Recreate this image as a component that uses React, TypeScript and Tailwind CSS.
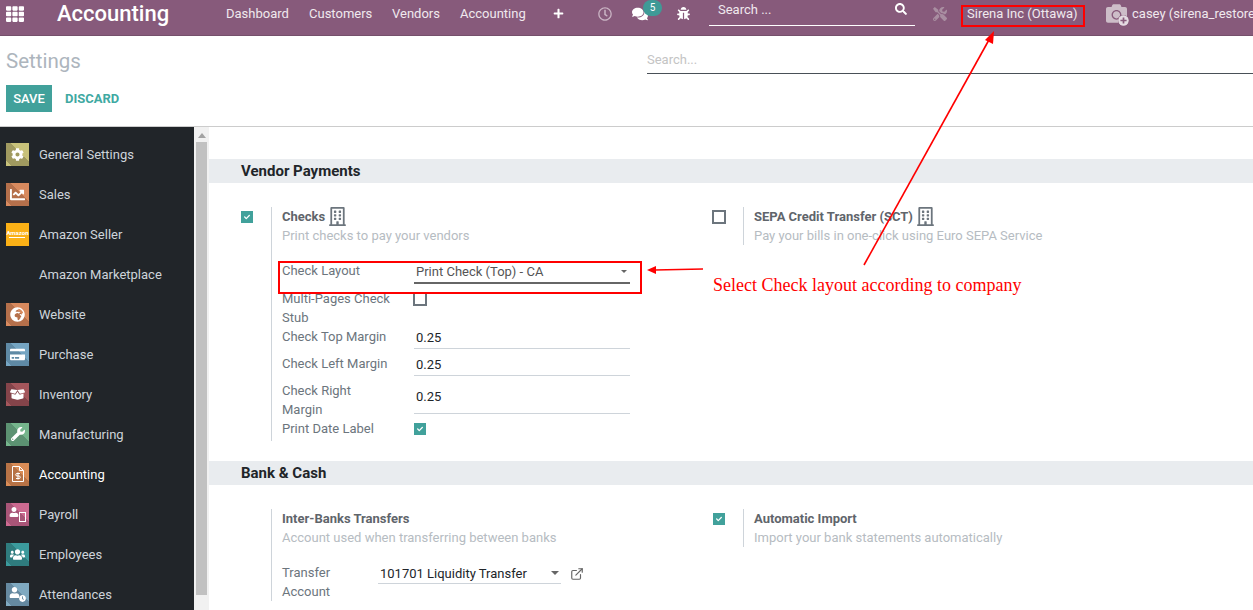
import type { ReactNode } from 'react';
import {
  FaBug,
  FaCamera,
  FaChartLine,
  FaCheck,
  FaClock,
  FaCog,
  FaComments,
  FaCreditCard,
  FaGlobeAfrica,
  FaPlus,
  FaRegBuilding,
  FaRegClock,
  FaSearch,
  FaTh,
  FaTools,
  FaUser,
  FaUsers,
  FaWrench,
  FaBoxOpen,
  FaPlusCircle,
} from 'react-icons/fa';
import { ExternalLink } from 'lucide-react';

const NAV_LINKS = [
  { label: 'Dashboard', cls: 'w-[83px]' },
  { label: 'Customers', cls: 'w-[83px]' },
  { label: 'Vendors', cls: 'w-[68px]' },
  { label: 'Accounting', cls: 'w-[93px]' },
];

const APPS: { label: string; bg: string; icon: ReactNode; active?: boolean }[] = [
  { label: 'General Settings', bg: 'bg-[linear-gradient(45deg,#c8c27a_12%,#a09a60_12%_60%,#c8c27a_60%)]', icon: <FaCog className="text-[13px]" /> },
  { label: 'Sales', bg: 'bg-[linear-gradient(45deg,#d88a5e_12%,#b5704b_12%_60%,#d88a5e_60%)]', icon: <FaChartLine className="text-[15px]" /> },
  {
    label: 'Amazon Seller',
    bg: 'bg-[#fbb116]',
    icon: (
      <span className="flex flex-col items-center text-[6px] leading-none font-bold">
        Amazon
        <span className="mt-[1px] h-[1px] w-[16px] bg-white" />
      </span>
    ),
  },
  { label: 'Amazon Marketplace', bg: '', icon: null },
  { label: 'Website', bg: 'bg-[linear-gradient(45deg,#d88a5e_12%,#b5704b_12%_60%,#d88a5e_60%)]', icon: <FaGlobeAfrica className="text-[15px]" /> },
  { label: 'Purchase', bg: 'bg-[linear-gradient(45deg,#75a5c2_12%,#5f8aa5_12%_60%,#75a5c2_60%)]', icon: <FaCreditCard className="text-[15px]" /> },
  { label: 'Inventory', bg: 'bg-[linear-gradient(45deg,#a4565b_12%,#84444a_12%_60%,#a4565b_60%)]', icon: <FaBoxOpen className="text-[15px]" /> },
  { label: 'Manufacturing', bg: 'bg-[linear-gradient(45deg,#75b58c_12%,#5c9272_12%_60%,#75b58c_60%)]', icon: <FaWrench className="text-[14px]" /> },
  {
    label: 'Accounting',
    bg: 'bg-[linear-gradient(45deg,#d98c56_12%,#b77346_12%_60%,#d98c56_60%)]',
    icon: (
      <svg width="12" height="16" viewBox="0 0 12 16" fill="none" stroke="currentColor" strokeWidth="1">
        <path d="M.5.5h7l4 4v11H.5z" />
        <path d="M7.5.5v4h4" />
        <path d="M8 7.5H5a1 1 0 0 0 0 2.500h2a1 1 0 0 1 0 2.500H4M6 6.500v7" />
      </svg>
    ),
    active: true,
  },
  {
    label: 'Payroll',
    bg: 'bg-[linear-gradient(45deg,#cc6a90_12%,#a85577_12%_60%,#cc6a90_60%)]',
    icon: (
      <span className="relative block h-[15px] w-[17px]">
        <FaUser className="absolute left-0 top-0 text-[10px]" />
        <span className="absolute bottom-0 right-0 h-[10px] w-[7px] border border-white" />
      </span>
    ),
  },
  { label: 'Employees', bg: 'bg-[linear-gradient(45deg,#3b9a9c_12%,#2f7c7e_12%_60%,#3b9a9c_60%)]', icon: <FaUsers className="text-[15px]" /> },
  {
    label: 'Attendances',
    bg: 'bg-[linear-gradient(45deg,#7fa9c0_12%,#6589a0_12%_60%,#7fa9c0_60%)]',
    icon: (
      <span className="relative block h-[15px] w-[17px]">
        <FaUser className="absolute left-0 top-0 text-[11px]" />
        <FaClock className="absolute bottom-0 right-0 text-[7px]" />
      </span>
    ),
  },
];

function Checkbox({ checked, size = 'w-3 h-3' }: { checked?: boolean; size?: string }) {
  if (checked) {
    return (
      <span className={`flex ${size} items-center justify-center bg-[#41a19b] text-white`}>
        <FaCheck className="text-[6px]" />
      </span>
    );
  }
  return <span className={`block ${size} border-2 border-[#6c757d] bg-white`} />;
}

function SectionHeader({ children }: { children: ReactNode }) {
  return <div className="flex h-6 items-center bg-[#e9ecef] pl-8 text-[15px] font-bold text-[#212529]">{children}</div>;
}

function FieldRow({ label, value, rowCls, lineCls = 'border-b border-[#ced4da]' }: { label: ReactNode; value: ReactNode; rowCls: string; lineCls?: string }) {
  return (
    <div className={`flex ${rowCls}`}>
      <div className="w-[132px] shrink-0 text-[#6c757d]">{label}</div>
      <div className="w-[216px] shrink-0">
        <div className={`py-[1px] pl-[2px] text-[13px] text-[#212529] ${lineCls}`}>{value}</div>
      </div>
    </div>
  );
}

export default function App() {
  return (
    <div className="relative h-[610px] w-[1253px] overflow-hidden bg-white font-['Roboto',sans-serif] text-[13px] leading-[19px]">
      {/* top bar */}
      <header className="flex h-[36px] items-center overflow-hidden whitespace-nowrap border-b border-[#75506b] bg-[#875a7b] pb-[8px] text-[#f0e9ee] [&>*]:shrink-0">
        <FaTh className="ml-[6px] text-[18px] text-white" />
        <span className="ml-[33px] w-[169px] text-[22px] font-medium leading-none text-white">Accounting</span>
        {NAV_LINKS.map((l) => (
          <span key={l.label} className={l.cls}>
            {l.label}
          </span>
        ))}
        <FaPlus className="ml-[0px] text-[11px] text-white" />
        <FaRegClock className="ml-[34px] text-[14px] text-[#c9b3c3]" />
        <span className="relative ml-[20px]">
          <FaComments className="text-[16px] text-white" />
          <span className="absolute -top-[6px] left-[11px] flex h-[16px] w-[19px] items-center justify-center rounded-full bg-[#3f9a97] text-[10px] leading-none text-white">
            5
          </span>
        </span>
        <FaBug className="ml-[29px] text-[13px] text-white" />
        <div className="ml-[19px] flex h-[26px] w-[206px] items-start justify-between self-start border-b border-white pl-[9px] pr-2 text-[#f0e9ee]">
          <span>Search ...</span>
          <FaSearch className="mt-[3px] text-[12px] text-white" />
        </div>
        <FaTools className="ml-[18px] text-[14px] text-[#a98ea1]" />
        <span className="ml-[20px] w-[139px]">Sirena Inc (Ottawa)</span>
        <span className="relative">
          <FaCamera className="text-[21px] text-[#cdbdc8]" />
          <FaPlusCircle className="absolute -bottom-[2px] right-[-2px] rounded-full bg-[#875a7b] text-[11px] text-[#e4dae1]" />
        </span>
        <span className="ml-[5px]">casey (sirena_restored)</span>
      </header>

      {/* control panel */}
      <div className="h-[91px] border-b border-[#ccc] pl-[6px]">
        <div className="flex items-start justify-between">
          <span className="mt-[11px] text-[20.5px] leading-7 text-[#adb5bd]">Settings</span>
          <div className="mt-[14px] h-[24px] w-[606px] border-b border-[#495057] text-[#c4c4c4]">Search...</div>
        </div>
        <div className="mt-[10px] flex items-center">
          <button className="h-[27px] w-[46px] bg-[#41a19b] text-[13px] font-medium text-white">SAVE</button>
          <button className="ml-[13px] text-[13px] font-bold text-[#3fa9a2]">DISCARD</button>
        </div>
      </div>

      <div className="flex h-[483px]">
        {/* apps sidebar */}
        <aside className="w-[194px] shrink-0 bg-[#212529] pt-[7px] text-[#ced4da]">
          {APPS.map((a) => (
            <div key={a.label} className="flex h-10 items-center pl-[6px]">
              <span className={`flex h-[23px] w-[23px] shrink-0 items-center justify-center text-white ${a.bg}`}>{a.icon}</span>
              <span className={`ml-[10px] ${a.active ? 'text-white' : ''}`}>{a.label}</span>
            </div>
          ))}
        </aside>

        {/* scrollbar */}
        <div className="flex w-[15px] shrink-0 flex-col items-center bg-[#f1f1f1] pt-[6px]">
          <span className="h-0 w-0 border-x-[4px] border-b-[5px] border-x-transparent border-b-[#a3a3a3]" />
          <span className="mt-[4px] h-[453px] w-[11px] bg-[#c1c1c1]" />
        </div>

        {/* settings body */}
        <main className="min-w-0 flex-1 pt-[32px]">
          <SectionHeader>Vendor Payments</SectionHeader>

          <div className="mt-[24px] flex">
            <div className="flex w-[503px] shrink-0">
              <div className="ml-[32px] mt-[4px] w-[30px]">
                <Checkbox checked />
              </div>
              <div className="h-[234px] border-l border-[#ced4da] pl-[10px]">
                <div className="flex h-[19px] items-center gap-[3px] font-bold text-[#5f656b]">
                  Checks <FaRegBuilding className="text-[19px] text-[#6c757d]" />
                </div>
                <div className="text-[#b6bcc2]">Print checks to pay your vendors</div>
                <FieldRow
                  rowCls="mt-[16px] h-[28px]"
                  label="Check Layout"
                  lineCls="border-b-2 border-[#666]"
                  value={
                    <div className="flex items-center justify-between pr-[3px] text-[#555]">
                      Print Check (Top) - CA
                      <span className="h-0 w-0 border-x-[3px] border-t-[3px] border-x-transparent border-t-[#666]" />
                    </div>
                  }
                />
                <div className="flex h-[38px]">
                  <div className="w-[131px] shrink-0 text-[#6c757d]">
                    Multi-Pages Check
                    <br />
                    Stub
                  </div>
                  <div className="pt-[3px]">
                    <Checkbox size="w-[14px] h-[14px]" />
                  </div>
                </div>
                <FieldRow rowCls="h-[27px]" label="Check Top Margin" value="0.25" />
                <FieldRow rowCls="h-[27px]" label="Check Left Margin" value="0.25" />
                <div className="flex h-[38px]">
                  <div className="w-[132px] shrink-0 text-[#6c757d]">
                    Check Right
                    <br />
                    Margin
                  </div>
                  <div className="h-[33px] w-[216px] border-b border-[#ced4da] pl-[2px] pt-[6px] text-[#212529]">0.25</div>
                </div>
                <div className="flex h-[19px]">
                  <div className="w-[132px] shrink-0 text-[#6c757d]">Print Date Label</div>
                  <div className="pt-1">
                    <Checkbox checked />
                  </div>
                </div>
              </div>
            </div>
            <div className="flex">
              <div className="mt-[3px] w-[31px]">
                <Checkbox size="w-[14px] h-[14px]" />
              </div>
              <div className="h-[38px] border-l border-[#ced4da] pl-[10px]">
                <div className="flex h-[19px] items-center gap-[3px] font-bold text-[#5f656b]">
                  SEPA Credit Transfer (SCT) <FaRegBuilding className="text-[19px] text-[#6c757d]" />
                </div>
                <div className="text-[#b6bcc2]">Pay your bills in one-click using Euro SEPA Service</div>
              </div>
            </div>
          </div>

          <div className="mt-[20px]">
            <SectionHeader>Bank &amp; Cash</SectionHeader>
          </div>

          <div className="mt-[24px] flex">
            <div className="flex w-[503px] shrink-0">
              <div className="ml-[62px] h-[92px] border-l border-[#ced4da] pl-[10px]">
                <div className="font-bold text-[#5f656b]">Inter-Banks Transfers</div>
                <div className="text-[#b6bcc2]">Account used when transferring between banks</div>
                <div className="mt-[16px] flex">
                  <div className="w-[96px] shrink-0 text-[#6c757d]">
                    Transfer
                    <br />
                    Account
                  </div>
                  <div className="flex h-[21px] w-[183px] items-center justify-between border-b border-[#ced4da] pl-[2px] pr-[2px] text-[#212529]">
                    101701 Liquidity Transfer
                    <span className="h-0 w-0 border-x-[4px] border-t-[4px] border-x-transparent border-t-[#666]" />
                  </div>
                  <ExternalLink className="ml-[9px] mt-[4px] h-[14px] w-[14px] text-[#666]" />
                </div>
              </div>
            </div>
            <div className="flex">
              <div className="ml-[1px] mt-[4px] w-[30px]">
                <Checkbox checked />
              </div>
              <div className="h-[38px] border-l border-[#ced4da] pl-[10px]">
                <div className="font-bold text-[#5f656b]">Automatic Import</div>
                <div className="text-[#b6bcc2]">Import your bank statements automatically</div>
              </div>
            </div>
          </div>
        </main>
      </div>

      {/* red annotations drawn over the screenshot */}
      <div className="absolute left-[961px] top-[5px] h-[22px] w-[124px] border-2 border-[#f00]" />
      <div className="absolute left-[278px] top-[261px] h-[33px] w-[364px] border-2 border-[#f00]" />
      <svg className="absolute left-0 top-0" width="1253" height="610" fill="none">
        <path d="M864 265 L990 38" stroke="#f00" strokeWidth="1.6" />
        <path d="M994 31 L985 40 L993 44 Z" fill="#f00" />
        <path d="M703 269 L655 270" stroke="#f00" strokeWidth="1.6" />
        <path d="M647 270 L656 266 L656 274 Z" fill="#f00" />
      </svg>
      <span className="absolute left-[713px] top-[274px] font-['Liberation_Serif',serif] text-[18px] leading-[22px] text-[#f00]">
        Select Check layout according to company
      </span>
    </div>
  );
}
